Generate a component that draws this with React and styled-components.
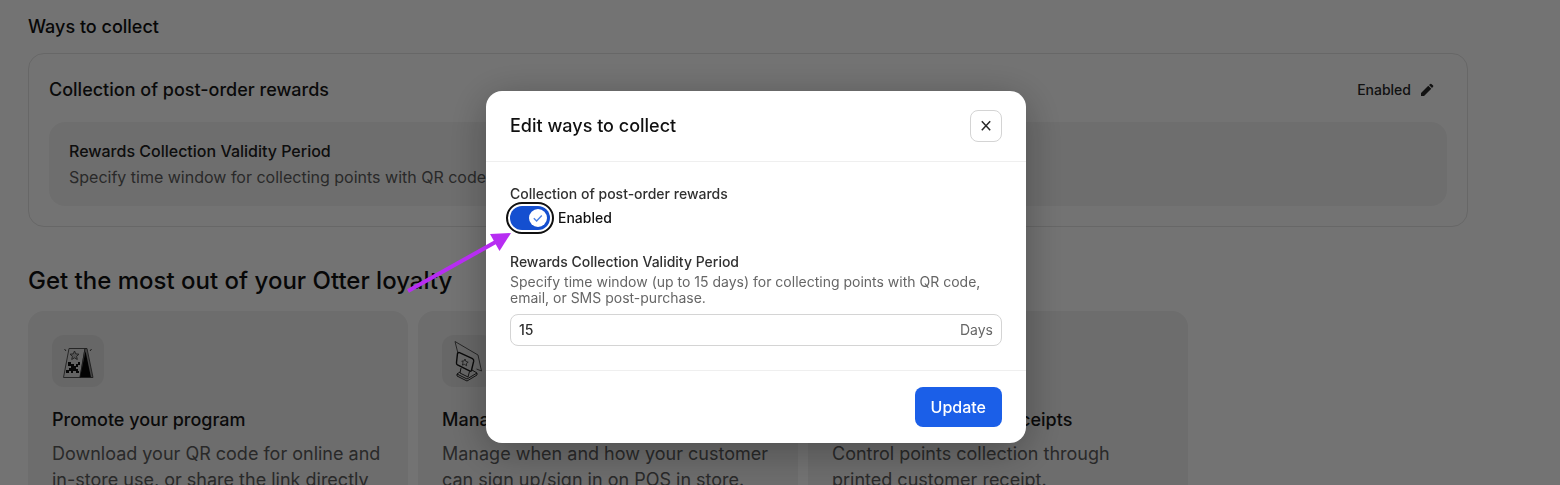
import React, { useState } from "react";
import styled, { createGlobalStyle } from "styled-components";

const GlobalStyle = createGlobalStyle`
  *, *::before, *::after { box-sizing: border-box; }
  body {
    margin: 0;
    overflow: hidden;
    background: #fff;
    color: #1c1c1c;
    font-family: Inter, "Liberation Sans", sans-serif;
  }
  h1, h2, h3, h4, p { margin: 0; }
  button, input { font-family: inherit; }
`;

const Page = styled.main`
  max-width: 1496px;
  padding: 13px 28px 40px;
`;

const SectionTitle = styled.h2`
  font-size: ${(p) => (p.$large ? 24 : 18)}px;
  line-height: ${(p) => (p.$large ? 36 : 28)}px;
  font-weight: 500;
  color: #101010;
`;

const Section = styled.section`
  display: flex;
  flex-direction: column;
  gap: 12px;
  margin-bottom: 36px;
`;

const SettingCard = styled.div`
  border: 1px solid #e4e4e4;
  border-radius: 16px;
  padding: 20px;
`;

const SettingHeader = styled.div`
  display: flex;
  align-items: center;
  justify-content: space-between;
  height: 32px;
  margin-bottom: 16px;
`;

const CardTitle = styled.h3`
  font-size: 18px;
  line-height: 26px;
  font-weight: 500;
  color: #181818;
`;

const EditButton = styled.button`
  display: flex;
  align-items: center;
  gap: 8px;
  padding: 0 12px;
  border: 0;
  background: none;
  color: #282828;
  font-size: 14px;
  line-height: 20px;
  font-weight: 500;
`;

const Detail = styled.div`
  padding: 16px 20px;
  border-radius: 16px;
  background: #f4f4f4;
  font-size: 16px;
  line-height: 26px;
  color: #5c5c5c;

  h4 {
    font-size: 16px;
    font-weight: 500;
    color: #202020;
  }
`;

const Tips = styled.div`
  display: grid;
  grid-template-columns: repeat(3, minmax(0, 380px));
  gap: 10px;
`;

const Tip = styled.article`
  padding: 24px;
  border-radius: 16px;
  background: #f1f1f1;
  font-size: 18px;
  line-height: 26px;
  color: #5c5c5c;

  h3 { margin: 20px 0 8px; }
`;

const TipIcon = styled.div`
  width: 52px;
  height: 52px;
  border-radius: 12px;
  background: #e4e4e4;

  svg { display: block; }
`;

const Overlay = styled.div`
  position: fixed;
  inset: 0;
  display: flex;
  justify-content: center;
  align-items: flex-start;
  padding: 91px 48px 0 0;
  background: rgba(0, 0, 0, 0.55);
`;

const Dialog = styled.form`
  position: relative;
  width: 540px;
  border-radius: 16px;
  background: #fff;
  box-shadow: 0 8px 40px rgba(0, 0, 0, 0.3);
`;

const DialogHeader = styled.header`
  display: flex;
  align-items: center;
  justify-content: space-between;
  height: 71px;
  padding: 0 24px;
  border-bottom: 1px solid #efefef;
`;

const CloseButton = styled.button`
  display: grid;
  place-items: center;
  width: 32px;
  height: 32px;
  padding: 0;
  border: 1px solid #d4d4d4;
  border-radius: 8px;
  background: #fff;
  color: #282828;
`;

const DialogBody = styled.div`
  padding: 24px;
  font-size: 14px;
  line-height: 16px;
`;

const FieldLabel = styled.label`
  display: block;
  font-weight: 500;
  color: #303030;
`;

const ToggleRow = styled.div`
  display: flex;
  align-items: center;
  gap: 8px;
  height: 24px;
  margin: 4px 0 24px;
  font-weight: 500;
  color: #101010;
`;

const ToggleBox = styled.span`
  display: grid;
  width: 40px;
  height: 24px;

  > * { grid-area: 1 / 1; }
  svg { pointer-events: none; }
`;

const Toggle = styled.input`
  appearance: none;
  width: 40px;
  height: 24px;
  margin: 0;
  border-radius: 12px;
  background: ${(p) => (p.checked ? "#144fd0" : "#a0a0a0")};
  outline: 2px solid #101010;
  outline-offset: 2px;
`;

const Hint = styled.p`
  margin: 4px 0 8px;
  color: #666;
`;

const InputBox = styled.div`
  display: flex;
  align-items: center;
  height: 32px;
  padding: 0 8px;
  border: 1px solid #d4d4d4;
  border-radius: 8px;
  color: #666;
`;

const DaysInput = styled.input`
  flex: 1;
  min-width: 0;
  height: 16px;
  padding: 0;
  border: 0;
  outline: 0;
  background: none;
  color: #303030;
  font-size: 14px;
  line-height: 16px;
  font-weight: 500;
`;

const DialogFooter = styled.footer`
  display: flex;
  justify-content: flex-end;
  padding: 16px 24px;
  border-top: 1px solid #efefef;
`;

const UpdateButton = styled.button`
  height: 40px;
  padding: 0 16px;
  border: 0;
  border-radius: 8px;
  background: #1b5fe8;
  color: #fff;
  font-size: 16px;
  line-height: 24px;
  font-weight: 500;
`;

const Pointer = styled.svg`
  position: absolute;
  left: -86px;
  top: 133px;
  pointer-events: none;
`;

const PencilIcon = () => (
  <svg width="16" height="16" viewBox="0 0 16 16" fill="currentColor" aria-hidden="true">
    <path d="M2 11 9.300 3.700l3 3L5 14H2zM10 3l1.200-1.100q.6-.5 1.200 0l1.700 1.700q.5.6 0 1.200L13 6z" />
  </svg>
);

const CloseIcon = () => (
  <svg width="16" height="16" viewBox="0 0 16 16" fill="none" stroke="currentColor" strokeWidth="1.5" aria-hidden="true">
    <path d="M3.8 3.3l8.4 9M12.2 3.3l-8.4 9" />
  </svg>
);

const StandIcon = () => (
  <svg width="52" height="52" viewBox="0 0 52 52" aria-hidden="true">
    <path d="M17 13.5h16L28 42.5H11.500z" fill="#dedede" stroke="#555" />
    <path d="M33 13.500h2l6 29H28z" fill="#999" stroke="#333" strokeWidth=".8" />
    <path d="M33.500 16 39 42.500H28z" fill="#080808" />
    <path d="m22.500 16 1.300 2.900 3.200.3-2.400 2.100.7 3.200-2.800-1.700-2.800 1.700.7-3.200-2.400-2.100 3.200-.3z" fill="#bbb" stroke="#444" strokeWidth=".9" />
    <path d="M16 27h3v2h3v2h2v-2h2v-2h2v3h-2v2h-2v2h2v2h1v2h-3v-2h-3v2h-2v-2h-2v2h-3v-3h3v-2h2v-2h-3z" fill="#111" />
    <path d="m12.500 14 1.500 2M39.500 14l-1.500 2M28.500 42.500h12" fill="none" stroke="#444" />
  </svg>
);

const TerminalIcon = () => (
  <svg width="52" height="52" viewBox="0 0 52 52" fill="none" stroke="#151515" aria-hidden="true">
    <path d="M13 6.500 36 20l3.500 16-5-2M13 6.500l3 12" stroke="#444" strokeWidth=".9" />
    <path d="M15.500 18.500q.5-1.500 2-.8l13 6q1.500.9 1.200 2.500l-2.200 9q-.5 1.500-2 .7l-12-6q-1.300-.8-1-2.300z" strokeWidth="1.400" />
    <path d="m23 24 .9 2.400 2.300.8-1.800 1.300.2 2.300-2-1.400-2.300.7.800-2.200-1.300-1.900 2.200.1z" strokeWidth=".8" stroke="#333" />
    <path d="m19 33-1 5 8 4 1.500-5.500M18 37l-3 2v2l10 5 10-6v-2l-5-3M15 39l10 5 10-6" strokeWidth=".9" />
  </svg>
);

const ReceiptIcon = () => (
  <svg width="52" height="52" viewBox="0 0 52 52" fill="none" stroke="#333" aria-hidden="true">
    <path d="M17 12h18v28l-3-2-3 2-3-2-3 2-3-2-3 2zM21 19h10M21 24h10M21 29h6" />
  </svg>
);

const CheckKnob = () => (
  <svg width="40" height="24" viewBox="0 0 40 24" fill="none" aria-hidden="true">
    <circle cx="28" cy="12" r="9" fill="#fff" />
    <path d="m23.800 12.300 2.800 2.700 5.200-5.600" stroke="#4c80e4" strokeWidth="1.400" />
  </svg>
);

const TIPS = [
  {
    icon: <StandIcon />,
    title: "Promote your program",
    text: "Download your QR code for online and in-store use, or share the link directly with customers.",
  },
  {
    icon: <TerminalIcon />,
    title: "Manage on your POS",
    text: "Manage when and how your customer can sign up/sign in on POS in store.",
  },
  {
    icon: <ReceiptIcon />,
    title: "Collections on your receipts",
    text: "Control points collection through printed customer receipt.",
  },
];

export default function App() {
  const [enabled, setEnabled] = useState(true);
  const [days, setDays] = useState("15");

  return (
    <>
      <GlobalStyle />
      <Page>
        <Section>
          <SectionTitle>Ways to collect</SectionTitle>
          <SettingCard>
            <SettingHeader>
              <CardTitle>Collection of post-order rewards</CardTitle>
              <EditButton type="button">
                Enabled
                <PencilIcon />
              </EditButton>
            </SettingHeader>
            <Detail>
              <h4>Rewards Collection Validity Period</h4>
              <p>Specify time window for collecting points with QR code, email, or SMS post-purchase.</p>
            </Detail>
          </SettingCard>
        </Section>
        <Section>
          <SectionTitle $large>Get the most out of your Otter loyalty</SectionTitle>
          <Tips>
            {TIPS.map((tip) => (
              <Tip key={tip.title}>
                <TipIcon>{tip.icon}</TipIcon>
                <CardTitle>{tip.title}</CardTitle>
                <p>{tip.text}</p>
              </Tip>
            ))}
          </Tips>
        </Section>
      </Page>

      <Overlay>
        <Dialog role="dialog" aria-labelledby="dialog-title" onSubmit={(e) => e.preventDefault()}>
          <DialogHeader>
            <SectionTitle id="dialog-title">Edit ways to collect</SectionTitle>
            <CloseButton type="button" aria-label="Close">
              <CloseIcon />
            </CloseButton>
          </DialogHeader>
          <DialogBody>
            <FieldLabel htmlFor="collection">Collection of post-order rewards</FieldLabel>
            <ToggleRow>
              <ToggleBox>
                <Toggle
                  id="collection"
                  type="checkbox"
                  role="switch"
                  checked={enabled}
                  onChange={(e) => setEnabled(e.target.checked)}
                />
                <CheckKnob />
              </ToggleBox>
              <span>{enabled ? "Enabled" : "Disabled"}</span>
            </ToggleRow>
            <FieldLabel htmlFor="days">Rewards Collection Validity Period</FieldLabel>
            <Hint>
              Specify time window (up to 15 days) for collecting points with QR code, email, or SMS post-purchase.
            </Hint>
            <InputBox>
              <DaysInput id="days" value={days} onChange={(e) => setDays(e.target.value)} />
              <span>Days</span>
            </InputBox>
          </DialogBody>
          <DialogFooter>
            <UpdateButton type="submit">Update</UpdateButton>
          </DialogFooter>
          <Pointer width="120" height="80" viewBox="0 0 120 80" aria-hidden="true">
            <path d="M8 67 101 15" stroke="#b72df2" strokeWidth="4" />
            <path d="M111 9 90 10l9.500 17z" fill="#b72df2" />
          </Pointer>
        </Dialog>
      </Overlay>
    </>
  );
}
